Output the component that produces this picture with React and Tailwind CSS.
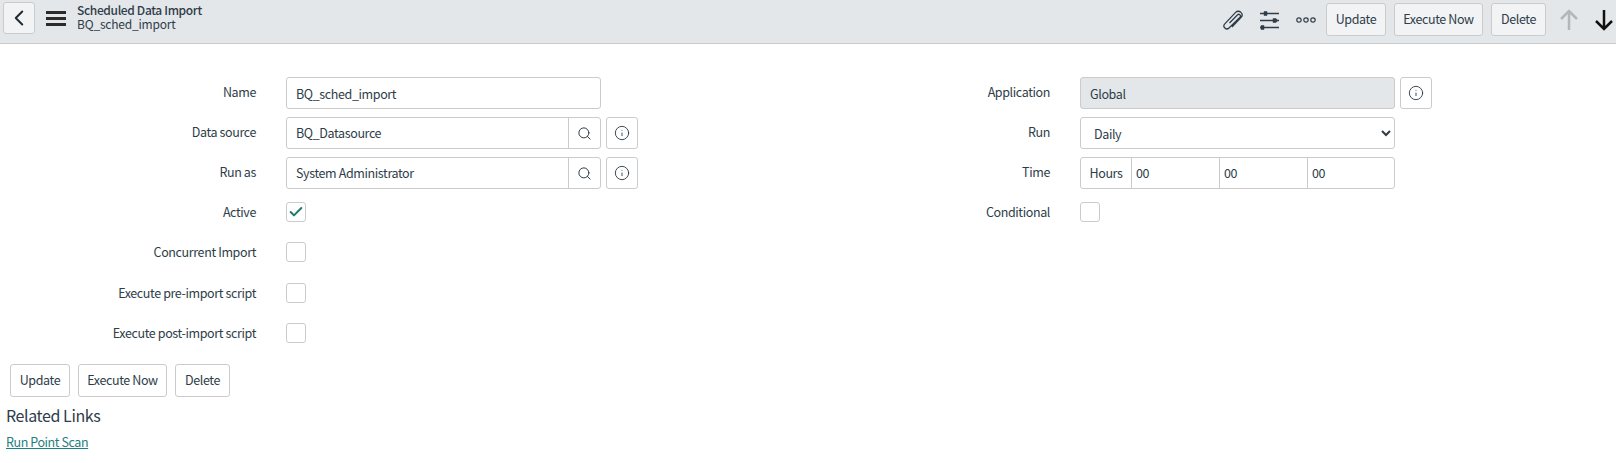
import React from "react";
import { Check, ChevronLeft, Info, Search } from "lucide-react";

const font = "font-['Noto_Sans_CJK_SC','Source_Sans_Pro',sans-serif]";
const box = "rounded-[3px] border border-[#cbcbcb] bg-white";
const copy = "text-[12.5px] tracking-[-0.38px] text-[#2e3d49]";

function ActionButton({ children, width, header }) {
  return (
    <button
      type="button"
      className={`h-[33px] rounded-[3px] border border-[#cbcbcb] ${width} ${copy} ${
        header ? "bg-[#f1f3f5]" : "bg-white"
      }`}
    >
      {children}
    </button>
  );
}

function ActionButtons({ header }) {
  return (
    <div className="flex gap-[8px]">
      <ActionButton header={header} width="w-[60px]">Update</ActionButton>
      <ActionButton header={header} width="w-[89px]">Execute Now</ActionButton>
      <ActionButton header={header} width="w-[55px]">Delete</ActionButton>
    </div>
  );
}

function InfoButton() {
  return (
    <button type="button" className={`ml-[5px] grid h-[32px] w-[32px] place-items-center ${box}`}>
      <Info className="h-[16px] w-[16px] text-[#2e3d49]" strokeWidth={1.4} />
    </button>
  );
}

function Row({ label, w, h = "h-[40px]", children }) {
  return (
    <div className={`flex items-start ${h}`}>
      <label className={`${w} shrink-0 pr-[30px] pt-[4px] text-right leading-[22px] ${copy}`}>{label}</label>
      {children}
    </div>
  );
}

function Toggle({ checked }) {
  return (
    <span className={`mt-[5px] grid h-[20px] w-[20px] place-items-center ${box}`}>
      {checked && <Check className="h-[16px] w-[16px] text-[#1f7a6c]" strokeWidth={3} />}
    </span>
  );
}

function TextField({ value }) {
  return (
    <input readOnly defaultValue={value} className={`h-[32px] w-[315px] px-[9px] outline-none ${copy} ${box}`} />
  );
}

function Lookup({ value }) {
  return (
    <>
      <div className={`flex h-[32px] w-[315px] overflow-hidden ${box}`}>
        <input readOnly defaultValue={value} className={`min-w-0 flex-1 px-[9px] outline-none ${copy}`} />
        <span className="grid w-[32px] place-items-center border-l border-[#cbcbcb]">
          <Search className="h-[15px] w-[15px] text-[#2e3d49]" strokeWidth={1.6} />
        </span>
      </div>
      <InfoButton />
    </>
  );
}

function ClipIcon() {
  return (
    <svg width="22" height="20" viewBox="0 0 22 20" fill="none" stroke="#2e3d49" strokeWidth="1.3">
      <path d="M7.5 13 15.6 4.8a1.7 1.7 0 0 1 2.4 2.4L7 18a2.9 2.9 0 0 1-4.2-4.1L13.6 2.4a3.6 3.6 0 0 1 5.3 0 3.6 3.6 0 0 1 .2 5L10 17" />
    </svg>
  );
}

function SlidersIcon() {
  return (
    <svg width="21" height="20" viewBox="0 0 21 20" fill="#2e3d49" stroke="#2e3d49">
      <path d="M1 3.5h19M1 10.5h19M1 17.5h19" strokeWidth="1.4" />
      <path d="M5 1.5h3v4H5zM2 15.5h3v4H2zM14 8.5h3l1.500 2-1.500 2h-3z" strokeWidth="0.5" />
    </svg>
  );
}

function DotsIcon() {
  return (
    <svg width="20" height="6" viewBox="0 0 20 6" fill="none" stroke="#2e3d49" strokeWidth="1.2">
      <circle cx="3" cy="3" r="2.200" />
      <circle cx="10" cy="3" r="2.200" />
      <circle cx="17" cy="3" r="2.200" />
    </svg>
  );
}

function ArrowIcon({ down, color }) {
  return (
    <svg width="20" height="22" viewBox="0 0 20 22" fill="none" stroke={color} strokeWidth="2.500">
      {down ? <path d="M10 1v19M2 12l8 8 8-8" /> : <path d="M10 21V2M2 10l8-8 8 8" />}
    </svg>
  );
}

function Header() {
  return (
    <header className="flex h-[44px] items-start border-b border-[#c9cbcd] bg-[#e4e7ea]">
      <button
        type="button"
        className="ml-[3px] mt-[2px] grid h-[32px] w-[32px] place-items-center rounded-[3px] border border-[#cbcbcb] bg-[#f1f3f5]"
      >
        <ChevronLeft className="h-[26px] w-[26px] text-[#1f2a33]" strokeWidth={1.8} />
      </button>
      <div className="ml-[11px] mt-[11px] flex w-[20px] flex-col gap-[3px]">
        <span className="h-[3px] bg-[#2b2b2b]" />
        <span className="h-[3px] bg-[#2b2b2b]" />
        <span className="h-[3px] bg-[#2b2b2b]" />
      </div>
      <div className="ml-[11px] mt-[3px] text-[12px] leading-[14px] tracking-[-0.2px] text-[#2e3d49]">
        <div className="font-medium tracking-[-0.35px]">Scheduled Data Import</div>
        <div>BQ_sched_import</div>
      </div>
      <div className="ml-auto mt-[3px] flex items-center">
        <ClipIcon />
        <span className="ml-[15px] flex">
          <SlidersIcon />
        </span>
        <span className="ml-[16px] mr-[10px] flex">
          <DotsIcon />
        </span>
        <ActionButtons header />
        <span className="ml-[13px] flex">
          <ArrowIcon color="#b4b7ba" />
        </span>
        <span className="ml-[15px] mr-[2px] flex">
          <ArrowIcon down color="#111" />
        </span>
      </div>
    </header>
  );
}

export default function App() {
  const left = "w-[286px]";
  const right = "w-[272px]";
  return (
    <div className={`h-[463px] bg-white ${font}`}>
      <Header />
      <div className="flex pt-[33px]">
        <div className="w-[808px]">
          <Row label="Name" w={left}>
            <TextField value="BQ_sched_import" />
          </Row>
          <Row label="Data source" w={left}>
            <Lookup value="BQ_Datasource" />
          </Row>
          <Row label="Run as" w={left}>
            <Lookup value="System Administrator" />
          </Row>
          <Row label="Active" w={left}>
            <Toggle checked />
          </Row>
          <Row label="Concurrent Import" w={left} h="h-[41px]">
            <Toggle />
          </Row>
          <Row label="Execute pre-import script" w={left}>
            <Toggle />
          </Row>
          <Row label="Execute post-import script" w={left} h="h-[46px]">
            <Toggle />
          </Row>
        </div>
        <div>
          <Row label="Application" w={right}>
            <input
              readOnly
              defaultValue="Global"
              className={`h-[32px] w-[315px] rounded-[3px] border border-[#cbcbcb] bg-[#e4e7ea] px-[9px] outline-none ${copy}`}
            />
            <InfoButton />
          </Row>
          <Row label="Run" w={right}>
            <select className={`h-[32px] w-[315px] pl-[9px] ${copy} ${box}`} defaultValue="Daily">
              <option>Daily</option>
            </select>
          </Row>
          <Row label="Time" w={right}>
            <div className={`flex h-[32px] w-[315px] overflow-hidden ${copy} ${box}`}>
              <span className="flex w-[50px] items-center justify-center">Hours</span>
              <input readOnly defaultValue="00" className="w-[88px] border-l border-[#cbcbcb] px-[4px] outline-none" />
              <input readOnly defaultValue="00" className="w-[88px] border-l border-[#cbcbcb] px-[4px] outline-none" />
              <input readOnly defaultValue="00" className="min-w-0 flex-1 border-l border-[#cbcbcb] px-[4px] outline-none" />
            </div>
          </Row>
          <Row label="Conditional" w={right}>
            <Toggle />
          </Row>
        </div>
      </div>
      <div className="pl-[10px]">
        <ActionButtons />
      </div>
      <div className="pl-[6px] pt-[6px]">
        <h2 className="text-[16px] leading-[24px] tracking-[-0.4px] text-[#2e3d49]">Related Links</h2>
        <a href="#" className="mt-[5px] block text-[12.5px] leading-[20px] tracking-[-0.42px] text-[#1f8080] underline">
          Run Point Scan
        </a>
      </div>
    </div>
  );
}
